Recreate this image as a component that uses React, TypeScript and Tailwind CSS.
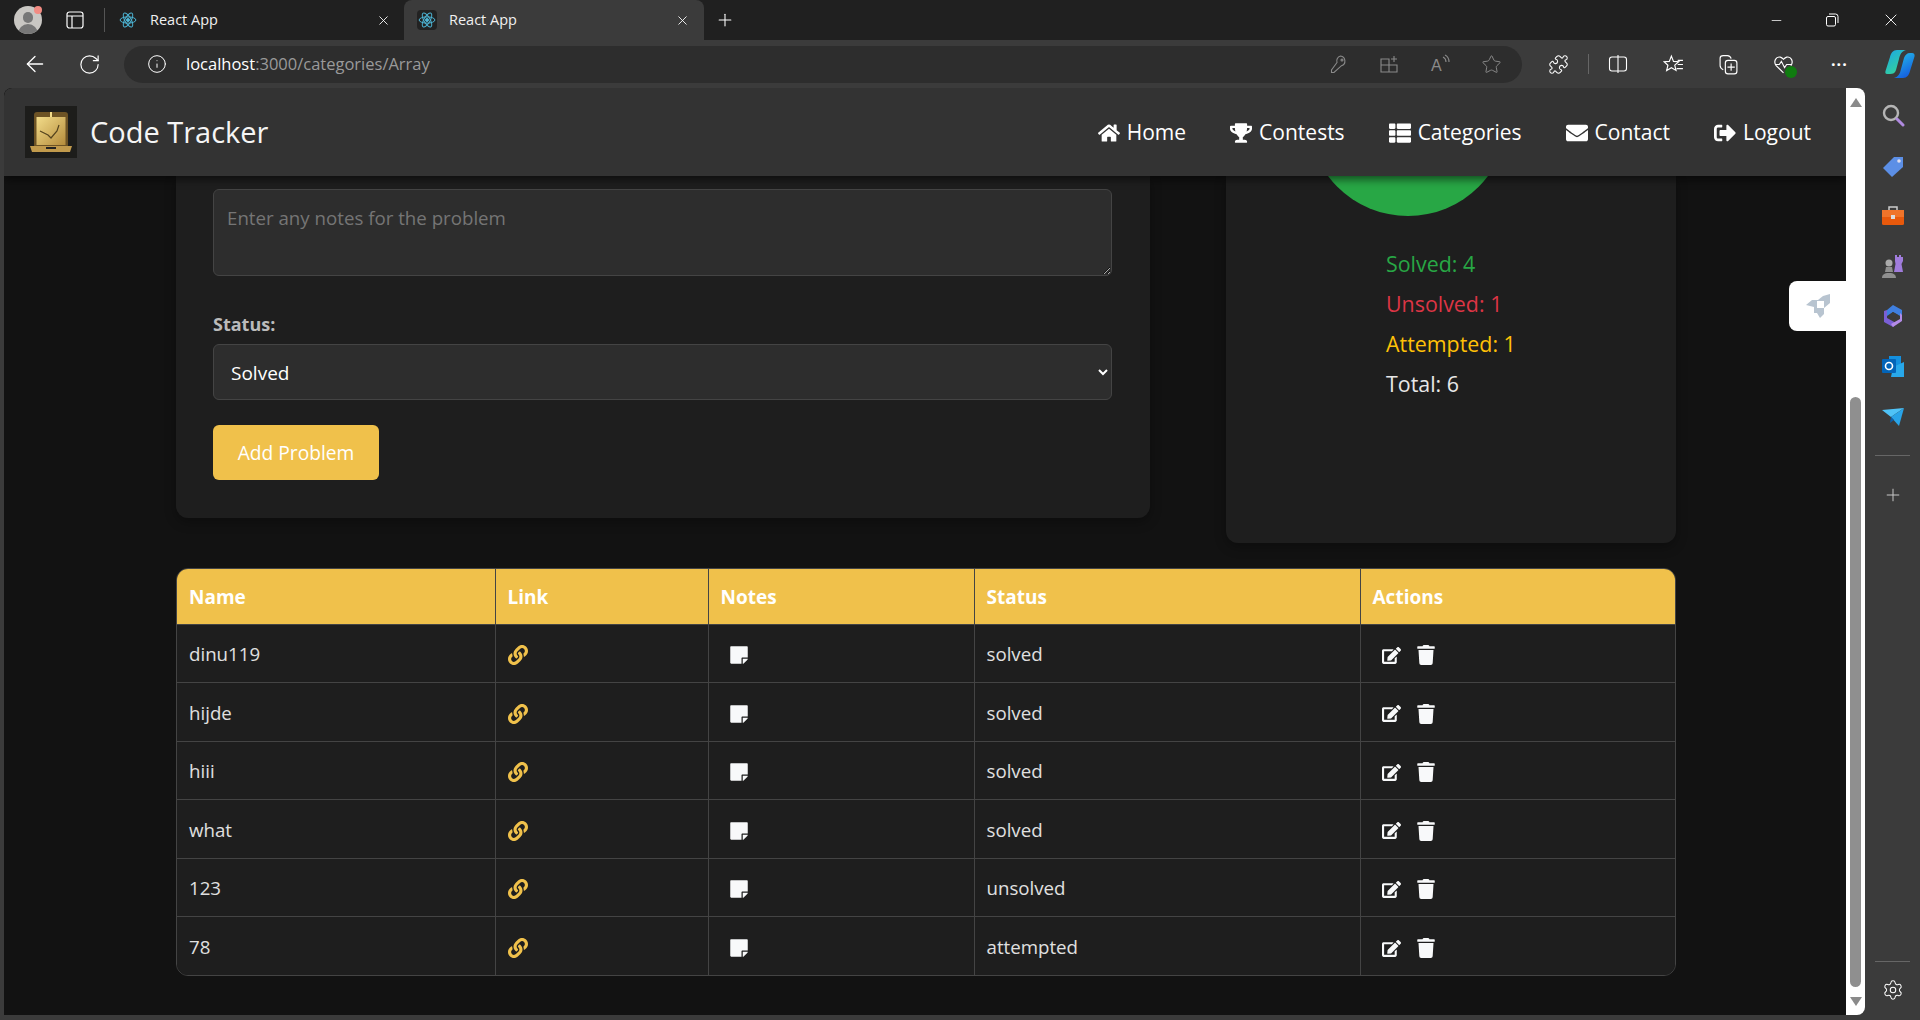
import { ArrowLeft, Info, Plus, Puzzle, RotateCw, Settings, Star, Minus, X } from "lucide-react";
import { FaEdit, FaEnvelope, FaHome, FaLink, FaSignOutAlt, FaStickyNote, FaThList, FaTrash, FaTrophy } from "react-icons/fa";

const problems = [
  { name: "dinu119", status: "solved" },
  { name: "hijde", status: "solved" },
  { name: "hiii", status: "solved" },
  { name: "what", status: "solved" },
  { name: "123", status: "unsolved" },
  { name: "78", status: "attempted" },
];

const navItems = [
  { label: "Home", icon: FaHome },
  { label: "Contests", icon: FaTrophy },
  { label: "Categories", icon: FaThList },
  { label: "Contact", icon: FaEnvelope },
  { label: "Logout", icon: FaSignOutAlt },
];

function Atom() {
  return (
    <svg viewBox="0 0 24 24" className="w-[18px] h-[18px]" fill="none" stroke="#4db6d6" strokeWidth="1.3">
      <circle cx="12" cy="12" r="2" fill="#4db6d6" />
      <ellipse cx="12" cy="12" rx="10.5" ry="4.2" />
      <ellipse cx="12" cy="12" rx="10.5" ry="4.2" transform="rotate(60 12 12)" />
      <ellipse cx="12" cy="12" rx="10.5" ry="4.2" transform="rotate(120 12 12)" />
    </svg>
  );
}

function Tab({ active }: { active?: boolean }) {
  return (
    <div className={`h-10 w-[300px] flex items-center pl-[13px] pr-[14px] rounded-t-lg ${active ? "bg-[#3b3b3b]" : ""}`}>
      <div className={`w-5 h-5 flex items-center justify-center rounded-sm ${active ? "bg-[#222]" : ""}`}>
        <Atom />
      </div>
      <span className="ml-3 text-[14.5px] text-[#f0f0f0] flex-1">React App</span>
      <X size={15} strokeWidth={1.4} className="text-white" />
    </div>
  );
}

function TabStrip() {
  return (
    <div className="h-10 bg-[#202020] flex items-center shrink-0">
      <div className="relative ml-[14px] w-[28px] h-[28px] rounded-full bg-[#c9c7c3] overflow-hidden">
        <div className="mx-auto mt-[6px] w-[10px] h-[11px] rounded-full bg-[#777]" />
        <div className="mx-auto mt-[1px] w-[20px] h-[12px] rounded-t-full bg-[#777]" />
      </div>
      <div className="relative -ml-[8px] -mt-[20px] w-[8px] h-[8px] rounded-full bg-[#f28b82]" />
      <svg viewBox="0 0 18 18" className="ml-[24px] w-[18px] h-[18px]" fill="none" stroke="#fff" strokeWidth="1.2">
        <rect x="1" y="1" width="16" height="16" rx="2.5" />
        <path d="M1 5h16M6 5v12" />
      </svg>
      <div className="ml-[20px] w-px h-6 bg-[#555]" />
      <div>
        <Tab />
      </div>
      <div className="-ml-[1px]">
        <Tab active />
      </div>
      <Plus size={20} strokeWidth={1.3} className="ml-[11px] text-white" />
      <div className="ml-auto flex items-center text-white">
        <Minus size={15} strokeWidth={1.2} />
        <svg viewBox="0 0 14 14" className="ml-[41px] w-[14px] h-[14px]" fill="none" stroke="#fff" strokeWidth="1">
          <rect x="1.5" y="3.5" width="9" height="9.5" rx="1.5" />
          <path d="M4 1h6.5A2.5 2.5 0 0 1 13 3.5V10" />
        </svg>
        <X size={20} strokeWidth={1.1} className="ml-[42px] mr-[19px]" />
      </div>
    </div>
  );
}

function Toolbar() {
  return (
    <div className="h-12 bg-[#3b3b3b] flex items-center shrink-0">
      <ArrowLeft size={26} strokeWidth={1.2} className="ml-[22px] text-white" />
      <RotateCw size={23} strokeWidth={1.2} className="ml-[30px] text-white" />
      <div className="ml-[23px] w-[1398px] h-[37px] rounded-full bg-[#2d2d2d] flex items-center pl-[23px] pr-[20px]">
        <Info size={20} strokeWidth={1.2} className="text-white" />
        <span className="ml-[19px] text-[16.5px] text-white">localhost<span className="text-[#9a9a9a]">:3000/categories/Array</span></span>
        <div className="ml-auto flex items-center gap-[31px] text-[#8a8a8a]">
          <svg viewBox="0 0 20 20" className="w-[20px] h-[20px]" fill="none" stroke="currentColor" strokeWidth="1.1">
            <path d="M12.500 2a5 5 0 0 1 1 9.700L6 18.500H3.500V16L9 8.500A5 5 0 0 1 12.500 2z" />
            <circle cx="14" cy="6" r="1" />
          </svg>
          <svg viewBox="0 0 20 20" className="w-[20px] h-[20px]" fill="none" stroke="currentColor" strokeWidth="1.1">
            <path d="M2 5h8v13H2zM2 11h16v7h-8M15 2v6M12 5h6" />
          </svg>
          <svg viewBox="0 0 20 20" className="w-[20px] h-[20px]" fill="none" stroke="currentColor" strokeWidth="1.1">
            <text x="1" y="17" fontSize="16" fill="currentColor" stroke="none" fontFamily="'Liberation Sans', sans-serif">A</text>
            <path d="M13 3c2 1 3 3 3 5M15 1c3 1.500 4 4 4 7" />
          </svg>
          <Star size={21} strokeWidth={1.1} />
        </div>
      </div>
      <Puzzle size={21} strokeWidth={1.2} className="ml-[26px] text-white" />
      <div className="ml-[19px] w-px h-5 bg-[#666]" />
      <svg viewBox="0 0 20 20" className="ml-[19px] w-[20px] h-[20px]" fill="none" stroke="#fff" strokeWidth="1.1">
        <rect x="1.500" y="3" width="17" height="14" rx="2.500" />
        <path d="M10 1v18" />
      </svg>
      <svg viewBox="0 0 20 20" className="ml-[35px] w-[21px] h-[21px]" fill="none" stroke="#fff" strokeWidth="1.1">
        <path d="M8 2l2 5 5 .4-3.800 3.200 1.200 5L8 13l-4.500 2.700 1.200-5L1 7.400 6 7z" />
        <path d="M14 6h5M14 10h5M13 14h6" />
      </svg>
      <svg viewBox="0 0 20 20" className="ml-[34px] w-[21px] h-[21px]" fill="none" stroke="#fff" strokeWidth="1.1">
        <path d="M5 15c-2-1-3-2-3-4V4c0-1.500 1-2.500 3-2.500h4c2 0 3 1 3.500 3" />
        <rect x="7" y="6" width="11" height="13" rx="2.500" />
        <path d="M12.500 9v7M9 12.500h7" />
      </svg>
      <div className="relative ml-[34px] w-[21px] h-[21px]">
        <svg viewBox="0 0 20 20" className="w-[21px] h-[21px]" fill="none" stroke="#fff" strokeWidth="1.1">
          <path d="M10 18L3 11C0 7 3 2 7 3c1.500.4 2.500 1.500 3 2 .5-.5 1.500-1.600 3-2 4-1 7 4 4 8M2 10h4l2-3 3 6 2-3h5" />
        </svg>
        <div className="absolute right-[-3px] bottom-[-3px] w-[12px] h-[12px] rounded-full bg-[#107c10]" />
      </div>
      <span className="ml-[37px] text-white text-[16px] leading-none tracking-[1px] font-bold">···</span>
      <svg viewBox="0 0 30 30" className="ml-[37px] w-[30px] h-[30px]">
        <defs>
          <linearGradient id="copA" x1="0" y1="0" x2="0.6" y2="1">
            <stop offset="0" stopColor="#1aa6e8" />
            <stop offset="1" stopColor="#35d39a" />
          </linearGradient>
          <linearGradient id="copB" x1="0" y1="0" x2="0.5" y2="1">
            <stop offset="0" stopColor="#25c4e8" />
            <stop offset="1" stopColor="#1560e0" />
          </linearGradient>
        </defs>
        <path d="M12 1h9c-4 1-6 4-7 9l-3 11c-1 3-3 4-6 4H2c-1.500 0-2-1-1.500-3L5 8c1-4 3-7 7-7z" fill="url(#copA)" />
        <path d="M18 29H9c4-1 6-4 7-9l3-11c1-3 3-5 6-5h2c2 0 3 1.500 2.500 3.500L25 22c-1 4-3 7-7 7z" fill="url(#copB)" />
      </svg>
    </div>
  );
}

function Navbar() {
  return (
    <nav className="relative z-10 h-[88px] shrink-0 bg-[#333] rounded-tl-lg flex items-center pl-[21px] pr-[35px] shadow-[0_3px_10px_rgba(0,0,0,0.6)]">
      <div className="w-[52px] h-[52px] bg-[#1d1d1b] flex items-center justify-center">
        <svg viewBox="0 0 52 52" className="w-[52px] h-[52px]">
          <defs>
            <linearGradient id="gold" x1="0" y1="0" x2="1" y2="1">
              <stop offset="0" stopColor="#f2dc8a" />
              <stop offset="1" stopColor="#b58c3c" />
            </linearGradient>
          </defs>
          <rect x="9" y="6" width="34" height="36" rx="3" fill="#6d5325" />
          <rect x="11.500" y="11" width="29" height="28" fill="url(#gold)" />
          <path d="M5 40h42l-2 6H7z" fill="#c19a4c" />
          <rect x="21" y="41" width="10" height="2" fill="#222" />
          <rect x="25" y="6" width="2" height="5" fill="#f2dc8a" />
          <path d="M15 25l8 4 3 3 6-7 2-6" fill="none" stroke="#54431e" strokeWidth="1.200" />
        </svg>
      </div>
      <span className="ml-[13px] text-[29px] text-[#f5f5f5]">Code Tracker</span>
      <ul className="ml-auto pt-[2px] flex items-center gap-[44px]">
        {navItems.map((item) => (
          <li key={item.label} className="flex items-center gap-[7px] text-[21px] text-white">
            <item.icon size={22} />
            {item.label}
          </li>
        ))}
      </ul>
    </nav>
  );
}

function AddForm() {
  return (
    <div className="w-[974px] h-[342px] bg-[#1e1e1e] rounded-b-xl pl-[37px] pr-[38px] pt-[13px] shadow-[0_4px_12px_rgba(0,0,0,0.3)]">
      <textarea
        readOnly
        placeholder="Enter any notes for the problem"
        className="block w-full h-[87px] bg-[#2d2d2d] border border-[#444] rounded-md px-[13px] pt-[14px] text-[18.7px] text-white placeholder-[#757575]"
      />
      <label className="block mt-[35px] text-[18px] leading-[26px] font-bold text-[#bbb]">Status:</label>
      <select className="block mt-[7px] w-full h-[56px] bg-[#2d2d2d] border border-[#444] rounded-md pl-[13px] pt-[2px] text-[19px] text-white">
        <option>Solved</option>
      </select>
      <button className="mt-[25px] w-[166px] h-[55px] bg-[#f0c14b] rounded-md pt-[2px] text-[19.2px] text-white">Add Problem</button>
    </div>
  );
}

function StatsCard() {
  return (
    <div className="w-[450px] h-[367px] bg-[#1e1e1e] rounded-b-xl shadow-[0_4px_12px_rgba(0,0,0,0.3)]">
      <div className="ml-[80px] w-[204px] h-10 overflow-hidden">
        <svg viewBox="0 60 204 40" className="w-[204px] h-10">
          <circle cx="102" cy="0" r="100" fill="#28a745" />
        </svg>
      </div>
      <div className="ml-[160px] mt-[33px] flex flex-col gap-[10px] text-[21.4px] leading-[30px]">
        <span className="text-[#28a745]">Solved: 4</span>
        <span className="text-[#dc3545]">Unsolved: 1</span>
        <span className="text-[#ffc107]">Attempted: 1</span>
        <span className="text-[#e8e8e8]">Total: 6</span>
      </div>
    </div>
  );
}

function ProblemsTable() {
  return (
    <div className="mt-[25px] w-[1500px] rounded-xl overflow-hidden border border-[#444]">
      <table className="w-full table-fixed border-collapse text-[18.7px]">
        <colgroup>
          <col className="w-[318px]" />
          <col className="w-[213px]" />
          <col className="w-[266px]" />
          <col className="w-[386px]" />
          <col />
        </colgroup>
        <thead>
          <tr className="h-[55px] bg-[#f0c14b] text-white text-[19px]">
            {["Name", "Link", "Notes", "Status", "Actions"].map((h, i) => (
              <th key={h} className={`px-3 pt-[2px] text-left font-bold ${i > 0 ? "border-l border-[#444]" : ""}`}>{h}</th>
            ))}
          </tr>
        </thead>
        <tbody>
          {problems.map((p) => (
            <tr key={p.name} className="h-[58.5px] bg-[#1e1e1e] border-t border-[#444] text-[#e0e0e0]">
              <td className="px-3 pt-[2px]">{p.name}</td>
              <td className="px-3 pt-[2px] border-l border-[#444]"><FaLink size={20} className="text-[#f0c14b] translate-y-px" /></td>
              <td className="px-3 pt-[2px] border-l border-[#444]"><FaStickyNote size={20} className="ml-2 text-[#f8f9fa] translate-y-px" /></td>
              <td className="px-3 pt-[2px] border-l border-[#444]">{p.status}</td>
              <td className="px-3 pt-[2px] border-l border-[#444]">
                <div className="flex items-center ml-[9px] gap-[15px] text-[#f8f9fa] translate-y-px">
                  <FaEdit size={19} />
                  <FaTrash size={20} />
                </div>
              </td>
            </tr>
          ))}
        </tbody>
      </table>
    </div>
  );
}

function Scrollbar() {
  return (
    <div className="w-[19px] shrink-0 bg-white rounded-tr-lg rounded-br-lg flex flex-col items-center pt-[10px] pb-[9px]">
      <div className="w-0 h-0 border-x-[6px] border-x-transparent border-b-[9px] border-b-[#8a8a8a]" />
      <div className="w-[11px] mt-[290px] flex-1 rounded-full bg-[#8f8f8f]" />
      <div className="w-0 h-0 mt-[10px] border-x-[6px] border-x-transparent border-t-[9px] border-t-[#8a8a8a]" />
    </div>
  );
}

function Sidebar() {
  return (
    <aside className="w-[55px] shrink-0 flex flex-col items-center pt-[16px] pb-[14px]">
      <div className="h-[22px] flex items-center">
        <svg viewBox="0 0 24 24" className="w-[24px] h-[24px]" fill="none">
          <circle cx="10" cy="10" r="7" stroke="#b5b5b5" strokeWidth="2.400" />
          <path d="M16 16l6 6" stroke="#b08ae0" strokeWidth="3" strokeLinecap="round" />
        </svg>
      </div>
      <div className="mt-[29px] h-[22px] flex items-center">
        <svg viewBox="0 0 24 24" className="w-[24px] h-[24px]">
          <path d="M13 3h9v10L11 23 2 14z" fill="#5c8fe6" />
          <circle cx="18" cy="7" r="1.800" fill="#dde" />
        </svg>
      </div>
      <div className="mt-[28px] h-[22px] flex items-center">
        <svg viewBox="0 0 24 24" className="w-[24px] h-[24px]">
          <path d="M8 6V3h8v3" fill="none" stroke="#ccc" strokeWidth="1.500" />
          <rect x="1" y="6" width="22" height="15" rx="1.500" fill="#e8590c" />
          <rect x="1" y="6" width="22" height="7" fill="#f0742a" />
          <rect x="10" y="11" width="4" height="4" fill="#ddd" />
        </svg>
      </div>
      <div className="mt-[28px] h-[22px] flex items-center">
        <svg viewBox="0 0 24 24" className="w-[24px] h-[24px]">
          <circle cx="8" cy="9" r="3.500" fill="#aaa" />
          <path d="M5 13h6l1 5H4zM1 24c0-3 2-5 7-5s7 2 7 5z" fill="#8f8f8f" />
          <path d="M14 1h2v2h2V1h2v2h2V1v6l-1.500 3 1.500 8h-9l1.500-8L14 7z" fill="#a07cdc" />
        </svg>
      </div>
      <div className="mt-[28px] h-[22px] flex items-center">
        <svg viewBox="0 0 24 24" className="w-[24px] h-[24px]">
          <path d="M12 1l9 5v7l-9-5-6 4V6z" fill="#3f7fe0" />
          <path d="M3 7l3-1v8l9 5-3 4-9-5z" fill="#7a5fd6" />
          <path d="M21 11v6l-9 6-2-3 9-5v-6z" fill="#b48be8" />
          <path d="M12 8l5 3-5 4-5-3z" fill="#3b3b3b" />
        </svg>
      </div>
      <div className="mt-[28px] h-[22px] flex items-center">
        <svg viewBox="0 0 24 24" className="w-[24px] h-[24px]">
          <rect x="8" y="2" width="12" height="11" fill="#1490df" />
          <path d="M12 13l11-5v15H10z" fill="#28a8ea" />
          <rect x="1" y="5" width="14" height="14" rx="1" fill="#0364b8" />
          <circle cx="8" cy="12" r="3.500" fill="none" stroke="#fff" strokeWidth="1.600" />
        </svg>
      </div>
      <div className="mt-[28px] h-[22px] flex items-center">
        <svg viewBox="0 0 24 24" className="w-[24px] h-[24px]">
          <path d="M1 6l22-2-13 9z" fill="#4fc3f7" />
          <path d="M23 4l-5 18-8-9z" fill="#29a4e8" />
          <path d="M10 13l-1 6 4-3z" fill="#0c5da8" />
        </svg>
      </div>
      <div className="mt-[28px] w-[35px] h-px bg-[#666]" />
      <Plus size={20} strokeWidth={1.2} className="mt-[29px] text-[#c8c8c8]" />
      <div className="mt-auto w-[35px] h-px bg-[#666]" />
      <Settings size={22} strokeWidth={1.1} className="mt-[17px] text-white" />
    </aside>
  );
}

export default function App() {
  return (
    <div className="w-[1920px] h-[1020px] overflow-hidden bg-[#3b3b3b] flex flex-col font-['Open_Sans',sans-serif]">
      <TabStrip />
      <Toolbar />
      <div className="flex-1 min-h-0 flex pl-[4px] pb-[5px]">
        <div className="relative flex-1 min-w-0 flex flex-col bg-[#121212] rounded-tl-lg overflow-hidden">
          <Navbar />
          <main className="flex-1 min-h-0 pl-[172px]">
            <div className="flex gap-[76px]">
              <AddForm />
              <StatsCard />
            </div>
            <ProblemsTable />
          </main>
          {/* floating rocket widget */}
          <div className="absolute right-0 top-[193px] w-[57px] h-[50px] bg-white rounded-l-lg flex items-center justify-center">
            <svg viewBox="0 0 26 26" className="w-[26px] h-[26px]">
              <path d="M25 1v9l-6 5v6l-4 4-3-5H9V14L1 12l6-5h6l5-4z" fill="#b8c4d0" />
              <rect x="12" y="8" width="7" height="7" fill="#fff" />
            </svg>
          </div>
        </div>
        <Scrollbar />
        <Sidebar />
      </div>
    </div>
  );
}
